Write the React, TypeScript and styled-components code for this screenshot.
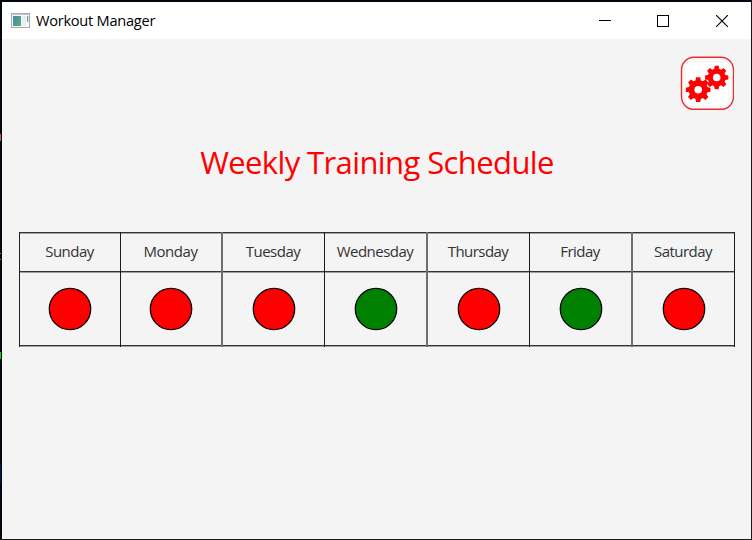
import React from "react";
import styled, { createGlobalStyle } from "styled-components";

const GlobalStyle = createGlobalStyle`
  * { box-sizing: border-box; }
  body { margin: 0; background: #050b16; font-family: "Open Sans", "Noto Sans", sans-serif; }
`;

const Desktop = styled.div`
  display: grid;
  grid-template-columns: 2px 749px 1px;
  grid-template-rows: 2px 537px 1px;
  width: 752px;
  height: 540px;
  background: linear-gradient(90deg, #020812 0 751px, #14181c 751px);
`;

const LeftEdge = styled.div`
  grid-column: 1;
  grid-row: 2;
  background:
    linear-gradient(#c45078, #c45078) 0 132px / 1px 7px no-repeat,
    linear-gradient(#a87838, #a87838) 0 251px / 1px 1px no-repeat,
    linear-gradient(#a87838, #a87838) 0 257px / 1px 1px no-repeat,
    linear-gradient(#00e000, #00e000) 0 350px / 1px 7px no-repeat,
    linear-gradient(#001a48, #001a48) 0 462px / 1px 19px no-repeat,
    #020812;
`;

const BottomEdge = styled.div`
  grid-column: 1 / 4;
  grid-row: 3;
  background: #16181a;
`;

const Window = styled.main`
  grid-column: 2;
  grid-row: 2;
  display: flex;
  flex-direction: column;
  background: #f4f4f4;
`;

const TitleBar = styled.header`
  display: flex;
  align-items: center;
  height: 37px;
  background: #fff;
`;

const AppIcon = styled.svg`
  width: 19px;
  height: 16px;
  margin: 0 6px 0 9px;
`;

const WindowTitle = styled.span`
  flex: 1;
  color: #000;
  font-size: 14.6px;
  line-height: 20px;
  letter-spacing: -0.26px;
  padding-bottom: 1px;
`;

const WindowButton = styled.button`
  display: grid;
  place-items: center;
  width: 58.5px;
  height: 37px;
  padding: 0;
  border: 0;
  background: none;
`;

const Content = styled.section`
  display: flex;
  flex-direction: column;
  padding: 17px 16px 0 17px;
`;

const SettingsButton = styled.button`
  align-self: flex-end;
  width: 54px;
  height: 54px;
  margin-right: 1px;
  padding: 0;
  border: 0;
  background: none;
  svg { display: block; }
`;

const Heading = styled.h1`
  margin: 28px 0 0;
  height: 48px;
  line-height: 48px;
  text-align: center;
  color: #f00;
  font-size: 31px;
  font-weight: 400;
  letter-spacing: -0.6px;
  white-space: nowrap;
`;

const Schedule = styled.div`
  display: flex;
  align-self: flex-start;
  margin-top: 46px;
  border-left: 1px solid #222;
`;

const Day = styled.div<{ $wide: number; $soft: boolean }>`
  width: ${(p) => p.$wide}px;
  border-right: ${(p) => (p.$soft ? "2px solid #6e6e6e" : "1px solid #1c1c1c")};
`;

const Rule = styled.div`
  height: 2px;
  background: linear-gradient(#333 0 1px, #a2a2a2 1px);
`;

const DayName = styled.div<{ $track: number }>`
  display: flex;
  align-items: center;
  justify-content: center;
  height: 37px;
  padding: 0 1px 3px 0;
  color: #333;
  font-size: 15px;
  letter-spacing: ${(p) => p.$track}px;
`;

const DayStatus = styled.div`
  display: flex;
  align-items: center;
  justify-content: center;
  height: 72px;
`;

const days = [
  { name: "Sunday", rest: true, wide: 101, soft: false, track: -0.5 },
  { name: "Monday", rest: true, wide: 102, soft: true, track: -0.45 },
  { name: "Tuesday", rest: true, wide: 102, soft: false, track: -0.5 },
  { name: "Wednesday", rest: false, wide: 103, soft: true, track: -0.5 },
  { name: "Thursday", rest: true, wide: 102, soft: false, track: -0.55 },
  { name: "Friday", rest: false, wide: 103, soft: true, track: -0.5 },
  { name: "Saturday", rest: true, wide: 102, soft: false, track: -0.55 },
];

function gearPath(cx: number, cy: number, outer: number, root: number, hole: number, turn: number) {
  const pts: string[] = [];
  const at = (r: number, deg: number) => {
    const a = (deg * Math.PI) / 180;
    pts.push(`${(cx + r * Math.cos(a)).toFixed(2)} ${(cy + r * Math.sin(a)).toFixed(2)}`);
  };
  for (let i = 0; i < 8; i++) {
    const c = turn + i * 45;
    at(root, c - 16);
    at(outer, c - 9.5);
    at(outer, c + 9.5);
    at(root, c + 16);
  }
  return `M${pts.join("L")}Z M${cx - hole} ${cy}a${hole} ${hole} 0 1 0 ${hole * 2} 0a${hole} ${hole} 0 1 0 ${-hole * 2} 0Z`;
}

const Gears = () => (
  <svg width="54" height="54" viewBox="0 0 54 54">
    <rect x="1.5" y="1.3" width="52" height="52" rx="12.5" fill="#f8f8f8" stroke="#ee2a32" strokeWidth="1.4" />
    <rect x="6" y="7" width="42" height="42" fill="#fff" />
    <path d={gearPath(18.2, 33.7, 12.5, 9.6, 3.8, 0)} fill="#f00" fillRule="evenodd" />
    <path d={gearPath(36.7, 21.5, 11.8, 9, 3.8, 0)} fill="#f00" fillRule="evenodd" />
  </svg>
);

export default function App() {
  return (
    <Desktop>
      <GlobalStyle />
      <LeftEdge />
      <Window>
        <TitleBar>
          <AppIcon viewBox="0 0 19 16">
            <defs>
              <linearGradient id="screen" x1="0" y1="0" x2="1" y2="1">
                <stop offset="0" stopColor="#4a86a4" />
                <stop offset="1" stopColor="#55b078" />
              </linearGradient>
            </defs>
            <rect x="0.5" y="0.5" width="18" height="14" fill="#f6f7f9" stroke="#aaa9b2" />
            <path d="M1 1.5h17" stroke="#c6c8d0" />
            <rect x="2" y="3" width="8" height="10" fill="url(#screen)" />
            <rect x="11" y="3" width="4" height="10" fill="#e9edf0" />
            <rect x="16" y="3" width="1.3" height="6" fill="#64b08c" />
          </AppIcon>
          <WindowTitle>Workout Manager</WindowTitle>
          <WindowButton aria-label="Minimize">
            <svg width="12" height="12"><path d="M0 5.5h12" stroke="#000" /></svg>
          </WindowButton>
          <WindowButton aria-label="Maximize">
            <svg width="12" height="12"><rect x=".5" y=".5" width="11" height="11" fill="none" stroke="#000" /></svg>
          </WindowButton>
          <WindowButton aria-label="Close">
            <svg width="12" height="12"><path d="M0 0l12 12M12 0L0 12" stroke="#000" strokeWidth="1.1" /></svg>
          </WindowButton>
        </TitleBar>
        <Content>
          <SettingsButton aria-label="Settings"><Gears /></SettingsButton>
          <Heading>Weekly Training Schedule</Heading>
          <Schedule>
            {days.map((d) => (
              <Day key={d.name} $wide={d.wide} $soft={d.soft}>
                <Rule />
                <DayName $track={d.track}>{d.name}</DayName>
                <Rule />
                <DayStatus>
                  <svg width="44" height="44">
                    <circle cx="22" cy="22" r="20.7" fill={d.rest ? "#f00" : "#008000"} stroke="#000" strokeWidth="1.3" />
                  </svg>
                </DayStatus>
                <Rule />
              </Day>
            ))}
          </Schedule>
        </Content>
      </Window>
      <BottomEdge />
    </Desktop>
  );
}
